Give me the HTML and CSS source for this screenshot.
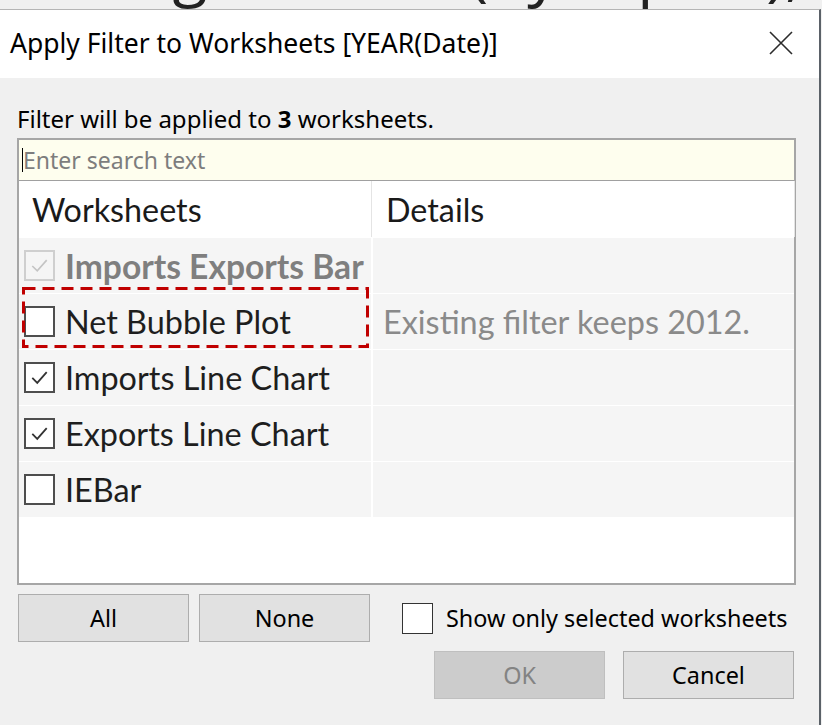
FILE: index.html
```html
<!DOCTYPE html>
<html>
<head>
<meta charset="utf-8">
<link rel="stylesheet" href="styles.css">
</head>
<body>
<div class="bgstrip"><span class="bgtext">Using Filters <span class="gap">(by top 10),</span></span></div>
<div class="dialog">
  <div class="titlebar">
    <span class="title">Apply Filter to Worksheets [YEAR(Date)]</span>
    <svg class="close" width="24" height="24" viewBox="0 0 24 24"><path d="M1 1 L23 23 M23 1 L1 23" stroke="#2b2b2b" stroke-width="1.6" fill="none"/></svg>
  </div>
  <div class="content">
    <p class="info">Filter will be applied to <b>3</b> worksheets.</p>
    <div class="listbox">
      <div class="search"><span class="caret"></span><span class="ph">Enter search text</span></div>
      <div class="grid">
        <div class="hcell">Worksheets</div>
        <div class="hcell">Details</div>

        <div class="cell"><span class="cb disabled"><svg viewBox="0 0 30 30"><path d="M7 15.5 L12.5 21 L23 9" stroke="#c4c4c4" stroke-width="1.8" fill="none"/></svg></span><span class="name dis">Imports Exports Bar</span></div>
        <div class="cell"></div>

        <div class="cell hl"><span class="cb"></span><span class="name">Net Bubble Plot</span>
          <svg class="dash" width="347" height="61" viewBox="0 0 347 61"><rect x="1.5" y="1.5" width="344" height="58" fill="none" stroke="#c00000" stroke-width="3" stroke-dasharray="12 7"/></svg>
        </div>
        <div class="cell"><span class="detail">Existing filter keeps 2012.</span></div>

        <div class="cell"><span class="cb"><svg viewBox="0 0 30 30"><path d="M7 15.5 L12.5 21 L23 9" stroke="#333" stroke-width="2" fill="none"/></svg></span><span class="name">Imports Line Chart</span></div>
        <div class="cell"></div>

        <div class="cell"><span class="cb"><svg viewBox="0 0 30 30"><path d="M7 15.5 L12.5 21 L23 9" stroke="#333" stroke-width="2" fill="none"/></svg></span><span class="name">Exports Line Chart</span></div>
        <div class="cell"></div>

        <div class="cell"><span class="cb"></span><span class="name">IEBar</span></div>
        <div class="cell"></div>
      </div>
    </div>
    <div class="controls">
      <div class="btn">All</div>
      <div class="btn">None</div>
      <label class="showonly"><span class="wcb"></span><span>Show only selected worksheets</span></label>
    </div>
    <div class="actions">
      <div class="btn disabled">OK</div>
      <div class="btn">Cancel</div>
    </div>
  </div>
</div>
</body>
</html>
```
FILE: styles.css
```css
html, body {
  margin: 0;
  padding: 0;
}
body {
  width: 822px;
  height: 725px;
  overflow: hidden;
  background: #f0f0f0;
  font-family: "Noto Sans", "Open Sans", sans-serif;
}
.bgstrip {
  height: 9px;
  overflow: hidden;
}
.bgtext {
  display: block;
  font-family: "Open Sans", sans-serif;
  font-size: 64px;
  line-height: 64px;
  margin-top: -62px;
  padding-left: 40px;
  color: #222;
  white-space: nowrap;
}
.gap {
  margin-left: 48px;
}
.dialog {
  width: 821px;
  height: 716px;
  border-top: 1px solid #b5b5b5;
  border-right: 2px solid #5b6168;
  background: #f0f0f0;
  box-sizing: border-box;
}
.titlebar {
  height: 68px;
  background: #ffffff;
  display: flex;
  align-items: center;
  justify-content: space-between;
  padding: 0 26px 0 10px;
}
.title {
  font-size: 26.5px;
  color: #000;
  margin-top: -2px;
}
.close {
  display: block;
  margin-top: -3px;
}
.content {
  padding: 0 23px 0 17px;
}
.info {
  margin: 0;
  padding-top: 21px;
  font-size: 24px;
  line-height: 39px;
  color: #000;
}
.info b {
  font-weight: 700;
}
.listbox {
  border: 2px solid #a6a6a6;
  height: 447px;
  box-sizing: border-box;
  background: #ffffff;
}
.search {
  height: 41px;
  background: #fefeee;
  border-bottom: 1px solid #a0a0a0;
  display: flex;
  align-items: center;
  padding-left: 3px;
  box-sizing: border-box;
}
.caret {
  width: 1px;
  height: 24px;
  background: #000;
}
.ph {
  font-size: 23px;
  color: #7d7d7d;
}
.grid {
  display: grid;
  grid-template-columns: 352px 1fr;
  grid-template-rows: 56px repeat(5, 55px);
  column-gap: 2px;
  row-gap: 1px;
  background: #ffffff;
}
.hcell {
  display: flex;
  align-items: center;
  padding-left: 13px;
  font-family: "Lato", sans-serif;
  font-size: 32.3px;
  color: #1a1a1a;
  background: #fff;
  box-shadow: 1px 0 0 #e4e4e4;
}
.cell {
  position: relative;
  display: flex;
  align-items: center;
  padding-left: 5px;
  background: #f5f5f5;
  font-family: "Lato", sans-serif;
  font-size: 32.4px;
  color: #1e1e1e;
}
.cb {
  width: 31px;
  height: 31px;
  box-sizing: border-box;
  border: 2px solid #4e4e4e;
  background: #fff;
  flex: none;
  margin-right: 10px;
}
.cb svg {
  display: block;
  width: 27px;
  height: 27px;
}
.cb.disabled {
  border-color: #cfcfcf;
  background: #f5f5f5;
}
.name.dis {
  color: #7f7f7f;
  font-weight: 700;
  font-size: 33.6px;
}
.detail {
  color: #8a8a8a;
  padding-left: 5px;
}
.dash {
  position: absolute;
  left: 3px;
  top: -7px;
}
.controls {
  display: flex;
  align-items: center;
  margin-top: 9px;
  height: 48px;
}
.btn {
  width: 171px;
  height: 48px;
  box-sizing: border-box;
  border: 1px solid #adadad;
  background: #e1e1e1;
  display: flex;
  align-items: center;
  justify-content: center;
  font-size: 23.4px;
  color: #000;
}
.controls .btn:first-child {
  margin-left: 1px;
}
.controls .btn + .btn {
  margin-left: 10px;
}
.showonly {
  display: flex;
  align-items: center;
  margin-left: 32px;
  font-size: 23.4px;
  color: #000;
}
.wcb {
  width: 31px;
  height: 31px;
  box-sizing: border-box;
  border: 1px solid #333;
  background: #fff;
  margin-right: 13px;
}
.actions {
  display: flex;
  justify-content: flex-end;
  margin-top: 9px;
  padding-right: 2px;
  gap: 18px;
}
.btn.disabled {
  background: #cccccc;
  border-color: #bfbfbf;
  color: #838383;
}
```
